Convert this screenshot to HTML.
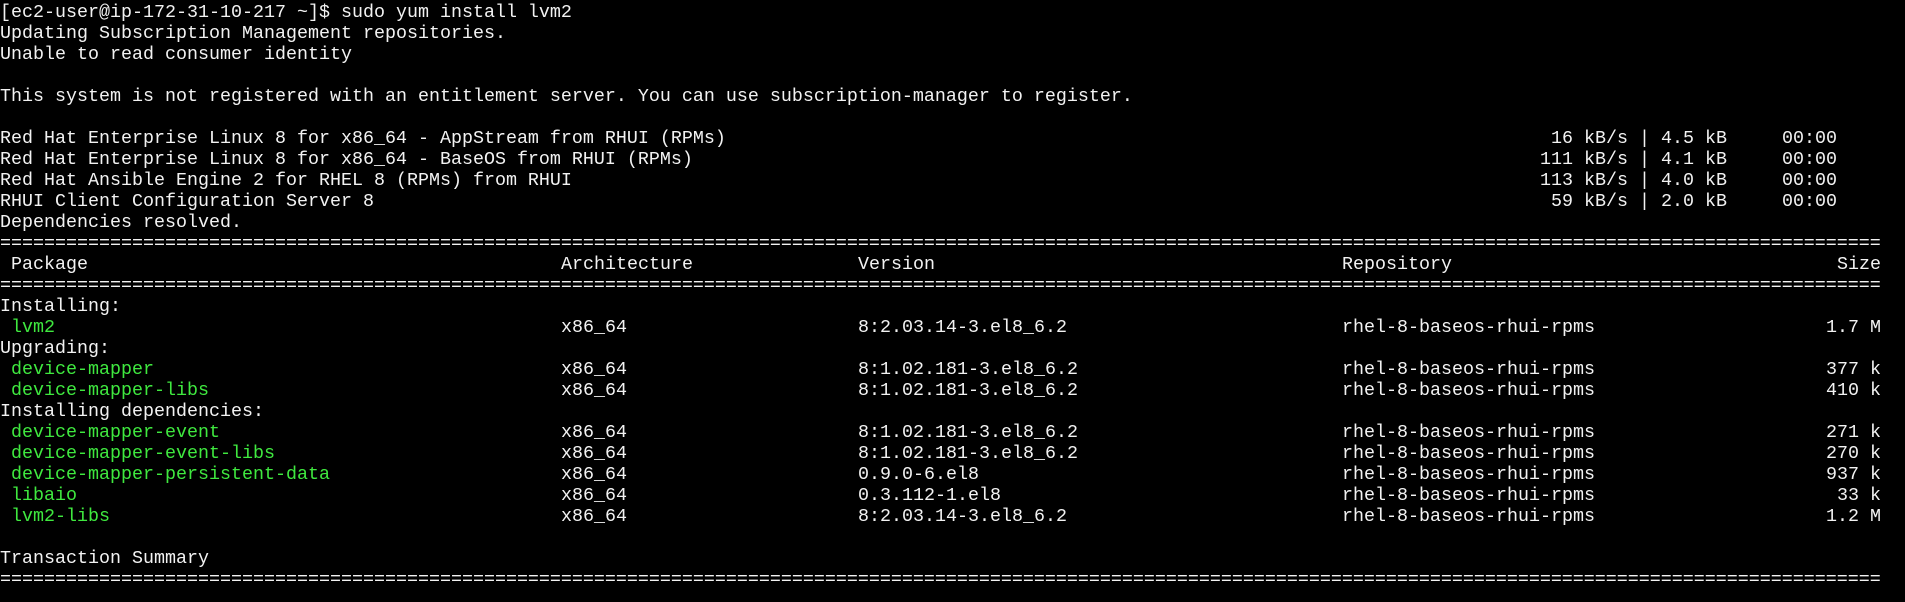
<!DOCTYPE html>
<html><head><meta charset="utf-8"><style>
html,body{margin:0;padding:0;background:#000;}
body{width:1905px;height:588px;overflow:hidden;position:relative;font-family:"Liberation Mono",monospace;font-size:18.33px;color:#f2f2f2;}
.w{position:absolute;left:0;top:2px;width:1905px;height:600px;}
.r{position:absolute;left:0;height:21px;line-height:21px;white-space:pre;width:1905px;}
.r span{position:absolute;top:0;}
.g{color:#3fe83f;}
.rt{right:24px;}
</style></head><body><div class="w">
<div class="r" style="top:0px"><span style="left:0">[ec2-user@ip-172-31-10-217 ~]$ sudo yum install lvm2</span></div>
<div class="r" style="top:21px"><span style="left:0">Updating Subscription Management repositories.</span></div>
<div class="r" style="top:42px"><span style="left:0">Unable to read consumer identity</span></div>
<div class="r" style="top:84px"><span style="left:0">This system is not registered with an entitlement server. You can use subscription-manager to register.</span></div>
<div class="r" style="top:126px"><span style="left:0">Red Hat Enterprise Linux 8 for x86_64 - AppStream from RHUI (RPMs)</span><span style="left:1540px"> 16 kB/s | 4.5 kB     00:00</span></div>
<div class="r" style="top:147px"><span style="left:0">Red Hat Enterprise Linux 8 for x86_64 - BaseOS from RHUI (RPMs)</span><span style="left:1540px">111 kB/s | 4.1 kB     00:00</span></div>
<div class="r" style="top:168px"><span style="left:0">Red Hat Ansible Engine 2 for RHEL 8 (RPMs) from RHUI</span><span style="left:1540px">113 kB/s | 4.0 kB     00:00</span></div>
<div class="r" style="top:189px"><span style="left:0">RHUI Client Configuration Server 8</span><span style="left:1540px"> 59 kB/s | 2.0 kB     00:00</span></div>
<div class="r" style="top:210px"><span style="left:0">Dependencies resolved.</span></div>
<div class="r" style="top:231px"><span style="left:0">===========================================================================================================================================================================</span></div>
<div class="r" style="top:252px"><span style="left:11px">Package</span><span style="left:561px">Architecture</span><span style="left:858px">Version</span><span style="left:1342px">Repository</span><span class="rt">Size</span></div>
<div class="r" style="top:273px"><span style="left:0">===========================================================================================================================================================================</span></div>
<div class="r" style="top:294px"><span style="left:0">Installing:</span></div>
<div class="r" style="top:315px"><span class="g" style="left:11px">lvm2</span><span style="left:561px">x86_64</span><span style="left:858px">8:2.03.14-3.el8_6.2</span><span style="left:1342px">rhel-8-baseos-rhui-rpms</span><span class="rt">1.7 M</span></div>
<div class="r" style="top:336px"><span style="left:0">Upgrading:</span></div>
<div class="r" style="top:357px"><span class="g" style="left:11px">device-mapper</span><span style="left:561px">x86_64</span><span style="left:858px">8:1.02.181-3.el8_6.2</span><span style="left:1342px">rhel-8-baseos-rhui-rpms</span><span class="rt">377 k</span></div>
<div class="r" style="top:378px"><span class="g" style="left:11px">device-mapper-libs</span><span style="left:561px">x86_64</span><span style="left:858px">8:1.02.181-3.el8_6.2</span><span style="left:1342px">rhel-8-baseos-rhui-rpms</span><span class="rt">410 k</span></div>
<div class="r" style="top:399px"><span style="left:0">Installing dependencies:</span></div>
<div class="r" style="top:420px"><span class="g" style="left:11px">device-mapper-event</span><span style="left:561px">x86_64</span><span style="left:858px">8:1.02.181-3.el8_6.2</span><span style="left:1342px">rhel-8-baseos-rhui-rpms</span><span class="rt">271 k</span></div>
<div class="r" style="top:441px"><span class="g" style="left:11px">device-mapper-event-libs</span><span style="left:561px">x86_64</span><span style="left:858px">8:1.02.181-3.el8_6.2</span><span style="left:1342px">rhel-8-baseos-rhui-rpms</span><span class="rt">270 k</span></div>
<div class="r" style="top:462px"><span class="g" style="left:11px">device-mapper-persistent-data</span><span style="left:561px">x86_64</span><span style="left:858px">0.9.0-6.el8</span><span style="left:1342px">rhel-8-baseos-rhui-rpms</span><span class="rt">937 k</span></div>
<div class="r" style="top:483px"><span class="g" style="left:11px">libaio</span><span style="left:561px">x86_64</span><span style="left:858px">0.3.112-1.el8</span><span style="left:1342px">rhel-8-baseos-rhui-rpms</span><span class="rt">33 k</span></div>
<div class="r" style="top:504px"><span class="g" style="left:11px">lvm2-libs</span><span style="left:561px">x86_64</span><span style="left:858px">8:2.03.14-3.el8_6.2</span><span style="left:1342px">rhel-8-baseos-rhui-rpms</span><span class="rt">1.2 M</span></div>
<div class="r" style="top:546px"><span style="left:0">Transaction Summary</span></div>
<div class="r" style="top:567px"><span style="left:0">===========================================================================================================================================================================</span></div>
</div></body></html>
